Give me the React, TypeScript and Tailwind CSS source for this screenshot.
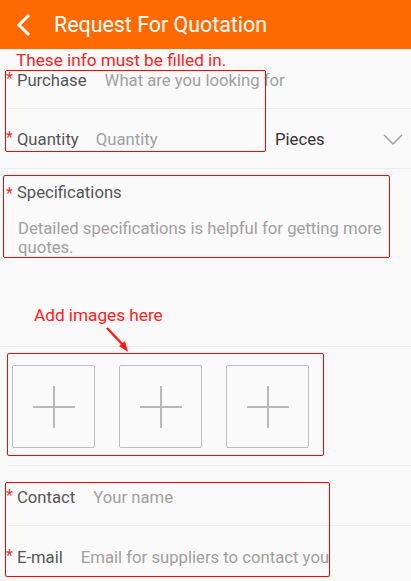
import React from "react";

const Star = () => (
  <span className="text-[#e53935] text-[16px] leading-none self-start mt-[3px] mr-[4px]">*</span>
);

const PlusBox = () => (
  <div className="w-[83px] h-[83px] border-[1.5px] border-[#bdbdbd] rounded-[2px] flex items-center justify-center">
    <svg width="42" height="42" viewBox="0 0 42 42">
      <line x1="0" y1="21" x2="42" y2="21" stroke="#bababa" strokeWidth="2" />
      <line x1="21" y1="0" x2="21" y2="42" stroke="#bababa" strokeWidth="2" />
    </svg>
  </div>
);

export default function App() {
  return (
    <div className="relative w-[411px] h-[581px] overflow-hidden bg-[#fafafa] font-['Roboto',sans-serif]">
      {/* Header */}
      <div className="h-[49px] bg-[#ff6a00] flex items-center">
        <svg className="ml-[16px]" width="16" height="24" viewBox="0 0 16 24">
          <polyline points="13,2 3,12 13,22" fill="none" stroke="#fff" strokeWidth="3" strokeLinejoin="miter" />
        </svg>
        <span className="ml-[22px] text-white text-[21.4px] leading-none">Request For Quotation</span>
      </div>

      {/* Purchase */}
      <div className="ml-2 h-[60px] border-b border-[#ececec] flex items-center">
        <div className="-ml-[2px] flex items-center text-[16.7px] pt-[4px]">
          <Star />
          <span className="text-[#555]">Purchase</span>
          <span className="ml-[18px] text-[#a0a0a0]">What are you looking for</span>
        </div>
      </div>

      {/* Quantity */}
      <div className="h-[60px] border-b border-[#ececec] flex items-center pl-[6px] pr-[8px]">
        <div className="flex items-center text-[16.7px] pt-[3px] w-[269px]">
          <Star />
          <span className="text-[#555]">Quantity</span>
          <span className="ml-[17px] text-[#a0a0a0]">Quantity</span>
        </div>
        <span className="text-[16.7px] text-[#333] pt-[3px]">Pieces</span>
        <svg className="ml-auto mt-[2px]" width="20" height="12" viewBox="0 0 20 12">
          <polyline points="1,1 10,10 19,1" fill="none" stroke="#9e9e9e" strokeWidth="1.5" />
        </svg>
      </div>

      {/* Specifications */}
      <div className="h-[178px] border-b border-[#ececec] pl-[6px] pt-[14px]">
        <div className="flex items-center text-[16.7px] leading-[20px]">
          <Star />
          <span className="text-[#555]">Specifications</span>
        </div>
        <p className="mt-[16px] ml-[12px] w-[375px] text-[16.7px] leading-[19px] text-[#a0a0a0]">
          Detailed specifications is helpful for getting more quotes.
        </p>
      </div>

      {/* Images */}
      <div className="ml-2 h-[119px] border-b border-[#ececec] flex gap-[24px] pt-[18px] pl-[4px]">
        <PlusBox />
        <PlusBox />
        <PlusBox />
      </div>

      {/* Contact */}
      <div className="ml-2 h-[60px] border-b border-[#ececec] flex items-center">
        <div className="-ml-[2px] flex items-center text-[16.7px] pt-[4px]">
          <Star />
          <span className="text-[#555]">Contact</span>
          <span className="ml-[18px] text-[#a0a0a0]">Your name</span>
        </div>
      </div>

      {/* E-mail */}
      <div className="ml-2 h-[60px] flex items-center">
        <div className="-ml-[2px] flex items-center text-[16.7px] pt-[4px]">
          <Star />
          <span className="text-[#555]">E-mail</span>
          <span className="ml-[18px] text-[#a0a0a0]">Email for suppliers to contact you</span>
        </div>
      </div>

      {/* Annotations */}
      <span className="absolute left-[16px] top-[50px] text-[17.2px] leading-[20px] text-[#ff2020]">
        These info must be filled in.
      </span>
      <div className="absolute left-[5px] top-[70px] w-[261px] h-[82px] border border-[#ff0000] rounded-[2px]" />
      <div className="absolute left-[3px] top-[175px] w-[387px] h-[83px] border border-[#ff0000] rounded-[2px]" />
      <span className="absolute left-[34px] top-[305px] text-[17.2px] leading-[20px] text-[#ff2020]">
        Add images here
      </span>
      <svg className="absolute left-[100px] top-[322px]" width="36" height="36" viewBox="0 0 36 36">
        <line x1="7" y1="6" x2="24" y2="24" stroke="#ff1a1a" strokeWidth="2.5" />
        <polygon points="19,24 28,30 25,19" fill="#ff1a1a" />
      </svg>
      <div className="absolute left-[7px] top-[353px] w-[317px] h-[103px] border border-[#ff0000] rounded-[2px]" />
      <div className="absolute left-[5px] top-[482px] w-[325px] h-[95px] border border-[#ff0000] rounded-[2px]" />
    </div>
  );
}
